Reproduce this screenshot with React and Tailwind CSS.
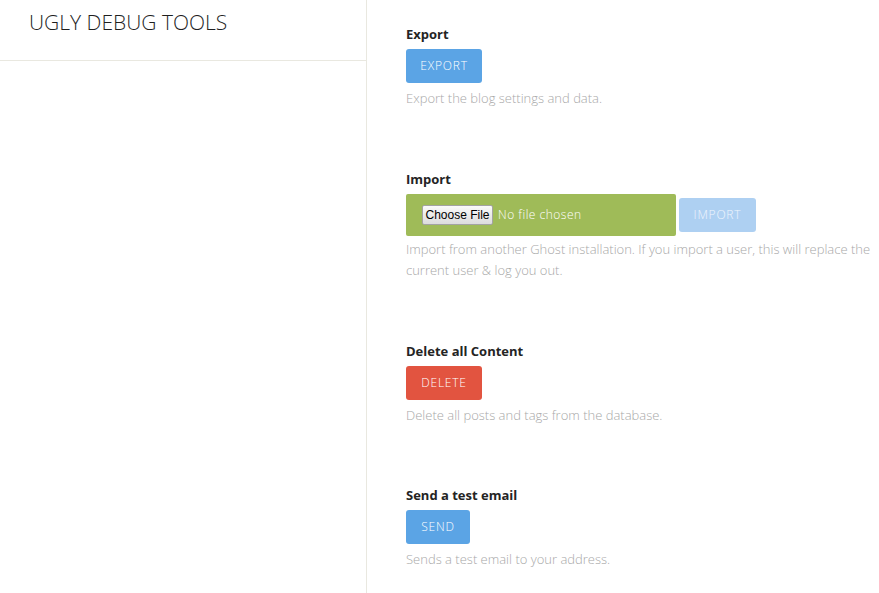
export default function App() {
  const font = { fontFamily: '"Open Sans", "Noto Sans", sans-serif' };
  return (
    <div className="flex h-[593px] w-[879px] bg-white overflow-hidden" style={font}>
      <aside className="w-[367px] shrink-0 border-r border-[#e9e8e0] flex flex-col">
        <header className="h-[61px] border-b border-[#e9e8e0] pl-[29px] pt-[7px]">
          <h1 className="text-[21px] leading-[30px] font-light text-[#1f1f1f]">UGLY DEBUG TOOLS</h1>
        </header>
      </aside>
      <main className="flex-1 pl-[39px] pt-[25px]">
        <section>
          <h2 className="text-[13px] leading-[18px] font-bold text-[#242424]">Export</h2>
          <button className="mt-[6px] h-[34px] w-[76px] rounded-[3px] bg-[#5ba4e5] text-[12px] font-light tracking-[0.8px] text-white">EXPORT</button>
          <p className="mt-[5px] text-[13px] leading-[21px] font-light text-[#a8a8a8]">Export the blog settings and data.</p>
        </section>
        <section className="mt-[61px]">
          <h2 className="text-[13px] leading-[18px] font-bold text-[#242424]">Import</h2>
          <div className="mt-[6px] flex items-center gap-[3px]">
            <div className="h-[42px] w-[270px] rounded-[2px] bg-[#9fbb58] flex items-center pl-[16px]">
              <span
                className="h-[20px] w-[71px] flex items-center justify-center border border-[#a3a3a3] rounded-[2px] bg-gradient-to-b from-[#fafafa] to-[#dcdcdc] text-[12px] text-black"
                style={{ fontFamily: '"Liberation Sans", Arial, sans-serif' }}
              >
                Choose File
              </span>
              <span className="ml-[5px] text-[12px] font-light tracking-[0.5px] text-white">No file chosen</span>
            </div>
            <button className="h-[34px] w-[77px] rounded-[3px] bg-[#aed0f2] text-[12px] font-light tracking-[0.8px] text-[#eef5fd]">IMPORT</button>
          </div>
          <p className="mt-[3px] w-[466px] text-[13px] leading-[21px] font-light text-[#a8a8a8]">
            Import from another Ghost installation. If you import a user, this will replace the current user &amp; log you out.
          </p>
        </section>
        <section className="mt-[61px]">
          <h2 className="text-[13px] leading-[18px] font-bold text-[#242424]">Delete all Content</h2>
          <button className="mt-[6px] h-[34px] w-[76px] rounded-[3px] bg-[#e25440] text-[12px] font-light tracking-[0.8px] text-white">DELETE</button>
          <p className="mt-[5px] text-[13px] leading-[21px] font-light text-[#a8a8a8]">Delete all posts and tags from the database.</p>
        </section>
        <section className="mt-[60px]">
          <h2 className="text-[13px] leading-[18px] font-bold text-[#242424]">Send a test email</h2>
          <button className="mt-[6px] h-[34px] w-[64px] rounded-[3px] bg-[#5ba4e5] text-[12px] font-light tracking-[0.8px] text-white">SEND</button>
          <p className="mt-[5px] text-[13px] leading-[21px] font-light text-[#a8a8a8]">Sends a test email to your address.</p>
        </section>
      </main>
    </div>
  );
}
